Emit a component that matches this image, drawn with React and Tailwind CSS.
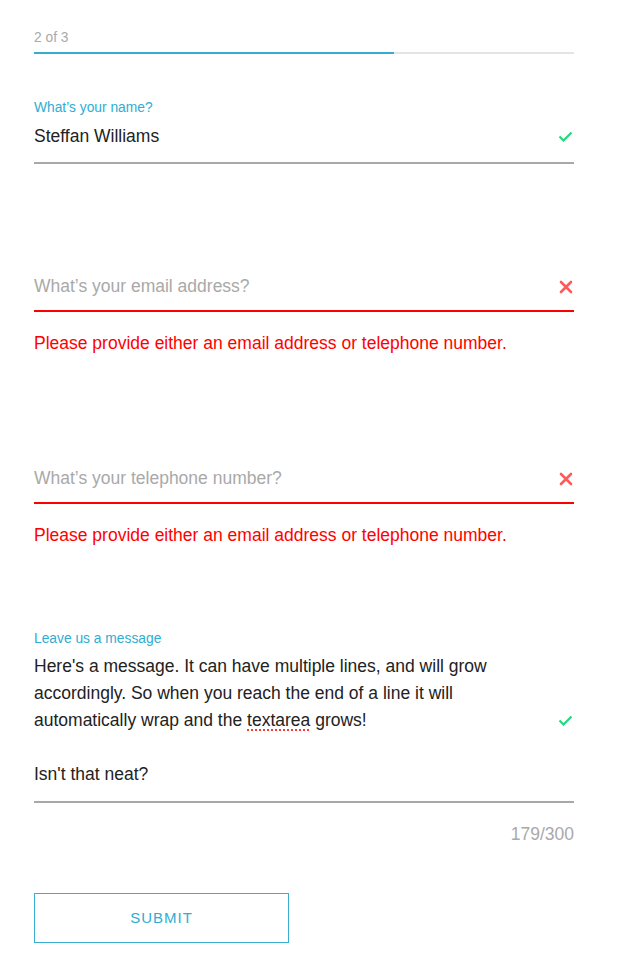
import { useState } from "react";

function Check() {
  return (
    <svg width="15" height="11" viewBox="0 0 15 11" className="shrink-0">
      <polyline points="1.5,5.5 5.5,9.5 13.5,1.5" fill="none" stroke="#1bd97b" strokeWidth="2" />
    </svg>
  );
}

function Cross() {
  return (
    <svg width="14" height="14" viewBox="0 0 14 14" className="shrink-0">
      <path d="M2 2L12 12M12 2L2 12" stroke="#ff5a5a" strokeWidth="2.6" strokeLinecap="round" />
    </svg>
  );
}

function Field({ label, value, placeholder, error, onChange }) {
  const bad = !!error;
  return (
    <div>
      <div className={"h-4 text-[13.8px] leading-4 text-[#2fadd2] " + (value ? "" : "invisible")}>{label}</div>
      <div
        className={
          "flex items-center border-b-2 " +
          (value ? "mt-[7px] pb-[12px] " : "mt-[9px] pb-[10px] ") +
          (bad ? "border-[#ff0000]" : "border-[#a8a8a8]")
        }
      >
        <input
          value={value}
          onChange={onChange}
          placeholder={placeholder}
          className="h-[27px] flex-1 bg-transparent text-[17.5px] leading-[27px] text-[#222] outline-none placeholder:text-[#a9a9a9]"
        />
        <div className="pr-[1px]">{bad ? <Cross /> : <Check />}</div>
      </div>
      {bad && <div className="mt-[18px] text-[17.5px] leading-[27px] text-[#ff0000]">{error}</div>}
    </div>
  );
}

export default function App() {
  const [name, setName] = useState("Steffan Williams");
  const [email, setEmail] = useState("");
  const [tel, setTel] = useState("");
  const err = "Please provide either an email address or telephone number.";

  return (
    <div className="min-h-screen bg-white font-['Liberation_Sans',Arial,sans-serif]">
      <div className="mx-[34px] w-[540px] pt-[30px]">
        {/* progress */}
        <div className="text-[13.8px] leading-4 text-[#a9a9a9]">2 of 3</div>
        <div className="mt-[6px] h-[2px] w-full bg-[#e1e5e8]">
          <div className="h-full w-2/3 bg-[#35add2]" />
        </div>

        <div className="mt-[46px]">
          <Field label="What’s your name?" value={name} onChange={(e) => setName(e.target.value)} />
        </div>

        <div className="mt-[84px]">
          <Field
            label="What’s your email address?"
            value={email}
            placeholder="What’s your email address?"
            error={err}
            onChange={(e) => setEmail(e.target.value)}
          />
        </div>

        <div className="mt-[83px]">
          <Field
            label="What’s your telephone number?"
            value={tel}
            placeholder="What’s your telephone number?"
            error={err}
            onChange={(e) => setTel(e.target.value)}
          />
        </div>

        {/* message */}
        <div className="mt-[82px]">
          <div className="h-4 text-[13.8px] leading-4 text-[#2fadd2]">Leave us a message</div>
          <div className="mt-[6px] flex items-center border-b-2 border-[#a8a8a8] pb-[13px]">
            <div className="flex-1 text-[17.5px] leading-[27px] text-[#222]">
              Here's a message. It can have multiple lines, and will grow
              <br />
              accordingly. So when you reach the end of a line it will
              <br />
              automatically wrap and the{" "}
              <span className="underline decoration-[#ff3b30] decoration-dotted decoration-2 underline-offset-[3px]">
                textarea
              </span>{" "}
              grows!
              <br />
              <br />
              Isn't that neat?
            </div>
            <div className="pr-[1px]">
              <Check />
            </div>
          </div>
          <div className="mt-[18px] text-right text-[17.5px] leading-[27px] text-[#a9a9a9]">179/300</div>
        </div>

        <button className="mt-[45px] h-[50px] w-[255px] border border-[#3aaed0] text-[15px] tracking-[1px] text-[#2fadd2]">
          SUBMIT
        </button>
      </div>
    </div>
  );
}
